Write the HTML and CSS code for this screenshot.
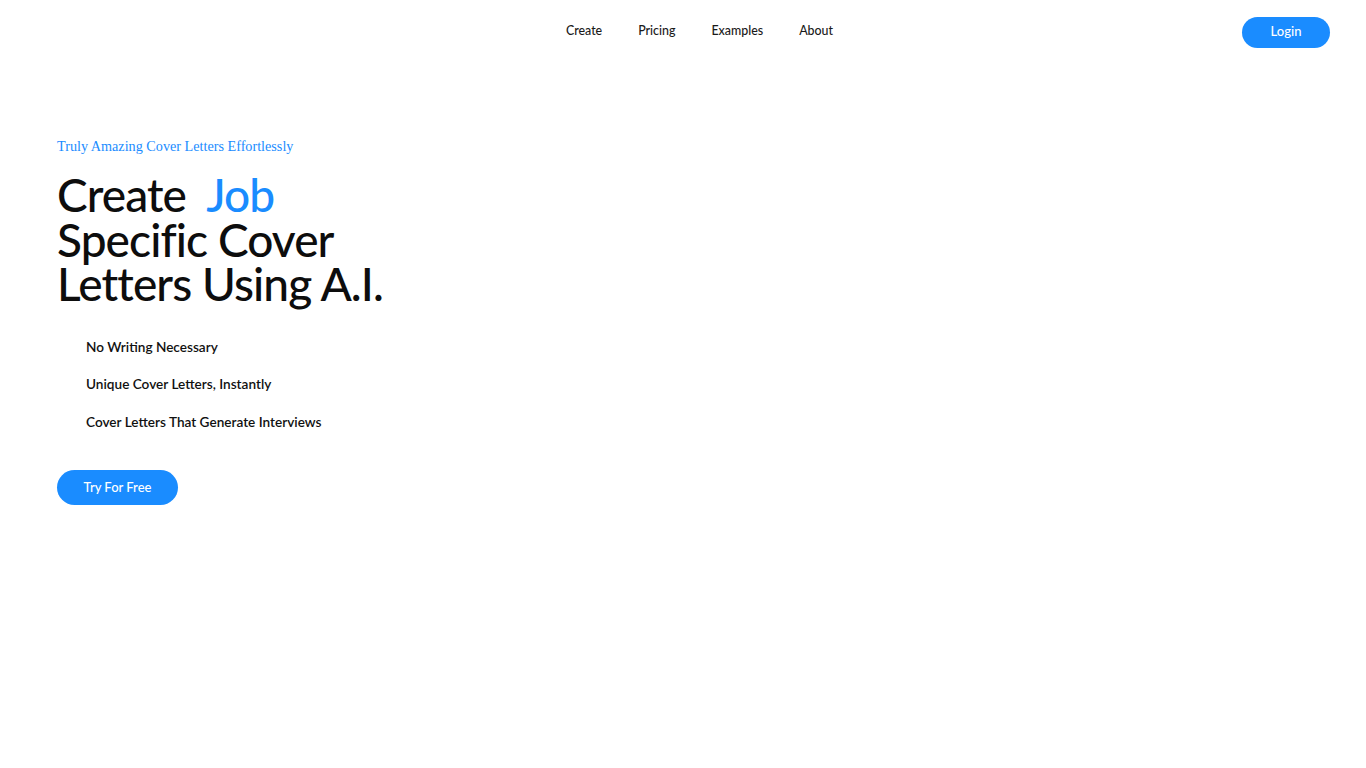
FILE: index.html
```html
<!DOCTYPE html>
<html lang="en">
<head>
<meta charset="utf-8">
<title>Cover Letters</title>
<link rel="stylesheet" href="styles.css">
</head>
<body>
<header class="topbar">
  <div class="brand"></div>
  <nav class="nav">
    <a href="#">Create</a>
    <a href="#">Pricing</a>
    <a href="#">Examples</a>
    <a href="#">About</a>
  </nav>
  <div class="actions"><a class="btn login" href="#">Login</a></div>
</header>
<main class="hero">
  <p class="tagline">Truly Amazing Cover Letters Effortlessly</p>
  <h1 class="title"><span class="line">Create&nbsp; <span class="accent">Job</span></span><span class="line">Specific Cover</span><span class="line">Letters Using A.I.</span></h1>
  <ul class="features">
    <li>No Writing Necessary</li>
    <li>Unique Cover Letters, Instantly</li>
    <li>Cover Letters That Generate Interviews</li>
  </ul>
  <a class="btn cta" href="#">Try For Free</a>
</main>
</body>
</html>
```
FILE: styles.css
```css
* { box-sizing: border-box; }
html, body { margin: 0; padding: 0; background: #fff; }
body {
  font-family: Lato, "Noto Sans", sans-serif;
  color: #111;
  width: 1366px;
  height: 768px;
  overflow: hidden;
}
a { text-decoration: none; }
.topbar {
  display: grid;
  grid-template-columns: 1fr auto 1fr;
  align-items: center;
  padding: 16px 36px 0 57px;
  height: 48px;
}
.nav {
  display: flex;
  gap: 36px;
  margin-left: 12px;
  margin-top: -4px;
}
.nav a {
  color: #1a1a1a;
  font-size: 12.4px;
  font-weight: 500;
}
.actions { display: flex; justify-content: flex-end; }
.btn {
  display: inline-flex;
  align-items: center;
  justify-content: center;
  background: #1a8cff;
  color: #fff;
  border-radius: 999px;
  font-size: 13px;
  font-weight: 500;
}
.login { width: 88px; height: 31px; padding-bottom: 3px; }
.hero { padding: 88px 57px 0; }
.tagline {
  margin: 0;
  font-family: "Liberation Serif", serif;
  font-size: 14.2px;
  color: #1a8cff;
  line-height: 20px;
}
.title {
  margin: 17px 0 0;
  font-size: 46px;
  font-weight: 500;
  letter-spacing: -0.9px;
  color: #0d0d0d;
  display: flex;
  flex-direction: column;
}
.title .line {
  display: block;
  height: 44.5px;
  line-height: 44.5px;
  overflow: visible;
}
.accent { color: #1a8cff; }
.features {
  list-style: none;
  margin: 31px 0 0;
  padding: 0 0 0 29px;
  display: flex;
  flex-direction: column;
  gap: 19.5px;
}
.features li {
  font-size: 13.6px;
  font-weight: 600;
  line-height: 18px;
  color: #111;
}
.cta {
  margin-top: 39px;
  width: 121px;
  height: 35px;
}
```
